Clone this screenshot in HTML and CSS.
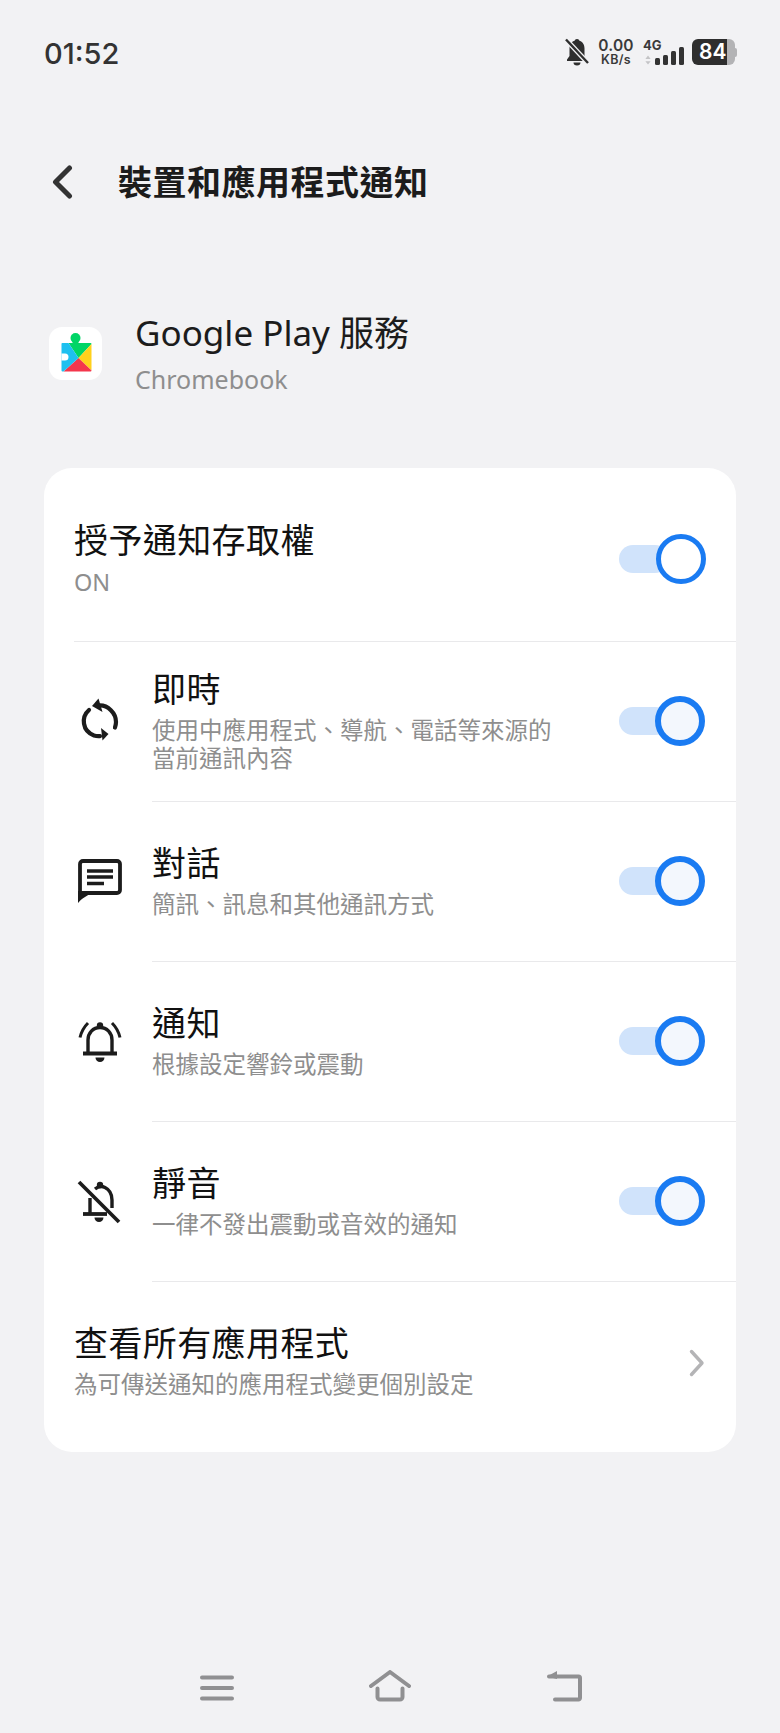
FILE: index.html
```html
<!DOCTYPE html>
<html lang="zh-Hant">
<head>
<meta charset="utf-8">
<title>裝置和應用程式通知</title>
<link rel="stylesheet" href="styles.css">
</head>
<body>
<div class="page">
  <header class="status">
    <span class="clock">01:52</span>
    <div class="status-right">
      <svg class="st-bell" viewBox="0 0 24 28"><circle cx="12" cy="3.500" r="2.500" fill="#2e2e2e"/><path d="M12 2.500c-5 0-7.500 3.500-7.500 8V18L2 21.500V23h20v-1.500L19.500 18v-7.500c0-4.500-2.500-8-7.500-8z" fill="#2e2e2e"/><path d="M8.500 24.500h7a3.500 3 0 0 1-7 0z" fill="#2e2e2e"/><path d="M1 1.500 23 25" stroke="#f2f2f4" stroke-width="5"/><path d="M1 1.500 23 25" stroke="#2e2e2e" stroke-width="2.400"/></svg>
      <div class="speed"><span>0.00</span><span>KB/s</span></div>
      <div class="net">
        <span class="net-4g">4G</span>
        <div class="net-bars">
          <svg class="arrows" viewBox="0 0 8 12"><path d="M4 0 7.500 4.500H.5zM4 12 .5 7.500h7z" fill="#c4c4c6"/></svg>
          <i class="b1"></i><i class="b2"></i><i class="b3"></i><i class="b4"></i>
        </div>
      </div>
      <div class="battery"><div class="batt-body"><span>84</span></div><i class="batt-tip"></i></div>
    </div>
  </header>

  <div class="appbar">
    <svg class="back" viewBox="0 0 22 34"><path d="M18.500 3 4.500 17l14 14" fill="none" stroke="#333" stroke-width="5" stroke-linecap="round" stroke-linejoin="round"/></svg>
    <h1>裝置和應用程式通知</h1>
  </div>

  <section class="app">
    <div class="app-icon">
      <svg viewBox="-1.500 0 44 50" class="puzzle">
        <circle cx="20" cy="10" r="5" fill="#00d566"/>
        <path d="M17 12h6v4h-6z" fill="#00d566"/>
        <path d="M13 15h22a1 1 0 0 1 1 1L23 30z" fill="#00d566"/>
        <path d="M36 16v26.500L23 30z" fill="#ffd11c"/>
        <path d="M8 43.500h27a1 1 0 0 0 1-1L23 30z" fill="#f4364c"/>
        <path d="M7 15h6l10 15L8 43.500H7a1 1 0 0 1-1-1V15.500a1 1 0 0 1 1-.5z" fill="#1ec0f0"/>
        <path d="M6 25.500h3.500a3.500 3.500 0 0 1 0 7H6z" fill="#fff"/>
      </svg>
    </div>
    <div class="app-text">
      <div class="app-name">Google Play 服務</div>
      <div class="app-sub">Chromebook</div>
    </div>
  </section>

  <section class="card">
    <div class="row row-first">
      <div class="text">
        <div class="title">授予通知存取權</div>
        <div class="sub sub-latin">ON</div>
      </div>
      <div class="switch"><i class="knob knob-white"></i></div>
    </div>
    <div class="row row-icon">
      <div class="ico"><svg viewBox="0 0 50 50" class="i-sync"><path d="M24 10.500C33 10 41 18 41 27c0 2-.4 3.500-1 5.500" fill="none" stroke="#1c1c1c" stroke-width="4.200" stroke-linecap="round"/><path d="M14 15C6 22 7 36 19 40.500c2 .6 4 .8 6 .6" fill="none" stroke="#1c1c1c" stroke-width="4.200" stroke-linecap="round"/><path d="M23.500 3.500 17 11l10.500 6z" fill="#1c1c1c"/><path d="M33.500 39 26 33l1.500 12.500z" fill="#1c1c1c"/></svg></div>
      <div class="text">
        <div class="title">即時</div>
        <div class="sub">使用中應用程式、導航、電話等來源的<br>當前通訊內容</div>
      </div>
      <div class="switch"><i class="knob"></i></div>
    </div>
    <div class="row row-icon">
      <div class="ico"><svg viewBox="0 0 44 44" class="i-chat"><path d="M2 39V5a3 3 0 0 1 3-3h34a3 3 0 0 1 3 3v26a3 3 0 0 1-3 3H10z" fill="none" stroke="#1c1c1c" stroke-width="3.800" stroke-linejoin="round"/><path d="M0 44V32h11z" fill="#1c1c1c"/><path d="M9 12h26M9 18h26M9 24.500h17" stroke="#1c1c1c" stroke-width="3.400"/></svg></div>
      <div class="text">
        <div class="title">對話</div>
        <div class="sub">簡訊、訊息和其他通訊方式</div>
      </div>
      <div class="switch"><i class="knob"></i></div>
    </div>
    <div class="row row-icon">
      <div class="ico"><svg viewBox="0 0 44 44" class="i-bell"><path d="M10 33V20c0-7 5-12.500 12-12.500S34 13 34 20v13" fill="none" stroke="#1c1c1c" stroke-width="3.400"/><circle cx="22" cy="5.500" r="3.200" fill="#1c1c1c"/><path d="M5 33.500h34" stroke="#1c1c1c" stroke-width="3.800"/><path d="M17.500 37.500h9a4.500 4.500 0 0 1-9 0z" fill="#1c1c1c"/><path d="M10 3C6 7 3.500 11 2 17.500M34 3c4 4 6.500 8 8 14.500" fill="none" stroke="#1c1c1c" stroke-width="3"/></svg></div>
      <div class="text">
        <div class="title">通知</div>
        <div class="sub">根據設定響鈴或震動</div>
      </div>
      <div class="switch"><i class="knob"></i></div>
    </div>
    <div class="row row-icon">
      <div class="ico"><svg viewBox="0 0 44 44" class="i-off"><path d="M13 18v15M18 9c3-2.500 7-3 10-1.500 5 2.500 7 7 7 12.500v8" fill="none" stroke="#1c1c1c" stroke-width="3.400"/><circle cx="23" cy="5" r="3.200" fill="#1c1c1c"/><path d="M6 34h24" stroke="#1c1c1c" stroke-width="3.800"/><path d="M17.500 37.500h9a4.500 4.500 0 0 1-9 0z" fill="#1c1c1c"/><path d="M2 2l40 40" stroke="#1c1c1c" stroke-width="3.800"/></svg></div>
      <div class="text">
        <div class="title">靜音</div>
        <div class="sub">一律不發出震動或音效的通知</div>
      </div>
      <div class="switch"><i class="knob"></i></div>
    </div>
    <div class="row row-last">
      <div class="text">
        <div class="title">查看所有應用程式</div>
        <div class="sub">為可傳送通知的應用程式變更個別設定</div>
      </div>
      <svg class="chevron" viewBox="0 0 16 28"><path d="M2.500 2.500 13 14 2.500 25.500" fill="none" stroke="#b4b4b6" stroke-width="3.400" stroke-linecap="round" stroke-linejoin="round"/></svg>
    </div>
  </section>

  <nav class="navbar">
    <svg class="nav-menu" viewBox="0 0 34 26"><path d="M2 2.500h30M2 13h30M2 23.500h30" stroke="#909092" stroke-width="4" stroke-linecap="round"/></svg>
    <svg class="nav-home" viewBox="0 0 42 32"><path d="M2 16 21 2l19 14" fill="none" stroke="#909092" stroke-width="4" stroke-linecap="round" stroke-linejoin="round"/><path d="M8.500 18.500V27a2.500 2.500 0 0 0 2.500 2.500h20a2.500 2.500 0 0 0 2.500-2.500v-8.500" fill="none" stroke="#909092" stroke-width="4" stroke-linecap="round"/></svg>
    <svg class="nav-back" viewBox="0 0 36 32"><path d="M3 6.500h29.500a1.500 1.500 0 0 1 1.500 1.500v20a1.500 1.500 0 0 1-1.500 1.500H9" fill="none" stroke="#909092" stroke-width="4" stroke-linecap="round" stroke-linejoin="round"/><path d="M1 6.500 11 1v8z" fill="#909092"/></svg>
  </nav>
</div>
</body>
</html>
```
FILE: styles.css
```css
* { box-sizing: border-box; }
html, body { margin: 0; padding: 0; }
body {
  background: #f2f2f4;
  font-family: "Noto Sans", "Noto Sans CJK TC", sans-serif;
  color: #1c1c1c;
}
.page {
  width: 780px;
  height: 1733px;
  display: flex;
  flex-direction: column;
  overflow: hidden;
}
.status {
  height: 64px;
  margin-top: 20px;
  padding: 0 43px 0 44px;
  display: flex;
  align-items: center;
  justify-content: space-between;
}
.clock {
  font-family: "Inter", sans-serif;
  font-size: 29px;
  font-weight: 500;
  color: #333;
  margin-top: 2px;
}
.status-right { display: flex; align-items: center; }
.st-bell { width: 24px; height: 28px; margin-right: 10px; }
.speed {
  display: flex;
  flex-direction: column;
  align-items: center;
  font-family: "Inter", sans-serif;
  font-weight: 600;
  color: #3a3a3a;
  width: 34px;
  margin-right: 10px;
}
.speed span:first-child { font-size: 15.500px; line-height: 15px; letter-spacing: .2px; }
.speed span:last-child { font-size: 12.500px; line-height: 14px; letter-spacing: .3px; }
.net { width: 44px; margin-right: 5px; display: flex; flex-direction: column; }
.net-4g { font-family: "Inter", sans-serif; font-size: 13px; font-weight: 700; line-height: 13px; color: #3a3a3a; }
.net-bars { display: flex; align-items: flex-end; gap: 3px; height: 18px; margin-top: -5px; padding-left: 2px; }
.arrows { width: 6px; height: 10px; margin-right: 1px; }
.net-bars i { width: 5px; background: #333; border-radius: 1.500px; display: block; }
.b1 { height: 7px; }
.b2 { height: 10px; }
.b3 { height: 14px; }
.b4 { height: 18px; }
.battery { display: flex; align-items: center; }
.batt-body {
  width: 43px;
  height: 26px;
  border-radius: 6px;
  background: linear-gradient(90deg, #2e2e2e 0 81%, #b3b3b5 81%);
  display: flex;
  align-items: center;
  padding-left: 7px;
}
.batt-body span {
  font-family: "Inter", sans-serif;
  color: #fff;
  font-size: 21px;
  font-weight: 600;
  line-height: 26px;
}
.batt-tip { width: 2px; height: 9px; background: #b3b3b5; border-radius: 0 2px 2px 0; display: block; }
.appbar {
  height: 64px;
  margin-top: 66px;
  padding-left: 51px;
  display: flex;
  align-items: center;
}
.back { width: 22px; height: 34px; margin-right: 45px; }
.appbar h1 {
  margin: 0 0 4px;
  font-family: "Noto Sans CJK TC", sans-serif;
  font-size: 34px;
  font-weight: 700;
  letter-spacing: .5px;
  color: #1c1c1c;
}
.app {
  height: 80px;
  margin-top: 99px;
  padding-left: 49px;
  display: flex;
  align-items: center;
}
.app-icon {
  width: 53px;
  height: 53px;
  border-radius: 13px;
  background: #fff;
  display: flex;
  align-items: center;
  justify-content: center;
  margin-right: 33px;
}
.puzzle { width: 44px; height: 50px; flex: none; }
.app-name { font-size: 35px; line-height: 46px; color: #1c1c1c; }
.app-sub { font-size: 25px; line-height: 34px; color: #8e8e8e; margin-top: 6px; }
.card {
  margin: 75px 44px 0;
  background: #fff;
  border-radius: 28px;
  height: 984px;
  display: flex;
  flex-direction: column;
  overflow: hidden;
}
.row {
  position: relative;
  display: flex;
  align-items: center;
  padding-left: 30px;
  padding-right: 30px;
}
.row-first { height: 174px; }
.row-icon { height: 160px; }
.row-last { flex: 1; }
.row-first::after, .row-icon::after {
  content: "";
  position: absolute;
  left: 108px;
  right: 0;
  bottom: 0;
  height: 1px;
  background: #e9e9eb;
}
.row-first::after { left: 30px; }
.row-first .text { padding-top: 2px; }
.row-icon .text { padding-bottom: 9px; }
.row-last .text { padding-bottom: 18px; }
.ico { width: 78px; flex: none; display: flex; align-items: center; }
.i-sync { width: 50px; height: 50px; flex: none; margin: -4px 0 0 1px; }
.i-chat { width: 44px; height: 44px; flex: none; margin: -3px 0 0 4px; }
.i-bell { width: 44px; height: 44px; flex: none; margin-left: 4px; }
.i-off { width: 44px; height: 44px; flex: none; margin-left: 3px; }
.text { flex: 1; min-width: 0; }
.title {
  font-family: "Noto Sans CJK TC", sans-serif;
  font-size: 34px;
  font-weight: 400;
  line-height: 46px;
  letter-spacing: .4px;
  color: #111;
}
.sub {
  font-family: "Noto Sans CJK TC", sans-serif;
  font-size: 23.500px;
  line-height: 28px;
  color: #8e8e8e;
  margin-top: 4px;
}
.sub-latin { font-family: "Noto Sans", sans-serif; margin-top: 6px; }
.switch {
  position: relative;
  flex: none;
  width: 50px;
  height: 28px;
  margin-right: 37px;
  background: #d0e3fb;
  border-radius: 14px;
}
.row-first .switch { margin-top: 8px; }
.row-icon .switch { margin-top: -3px; }
.knob {
  position: absolute;
  right: -36px;
  top: -11px;
  width: 50px;
  height: 50px;
  border-radius: 50%;
  border: 6px solid #1a7bf2;
  background: #f3f7fd;
  display: block;
}
.knob-white { background: #fff; border-width: 5px; right: -37px; }
.chevron { width: 16px; height: 28px; margin: -9px 1px 0 0; }
.navbar {
  height: 32px;
  margin-top: 218px;
  padding-left: 200px;
  display: flex;
  align-items: center;
}
.nav-menu { width: 34px; height: 26px; margin: 4px 135px 0 0; }
.nav-home { width: 42px; height: 32px; margin-right: 135px; }
.nav-back { width: 36px; height: 32px; }
```
